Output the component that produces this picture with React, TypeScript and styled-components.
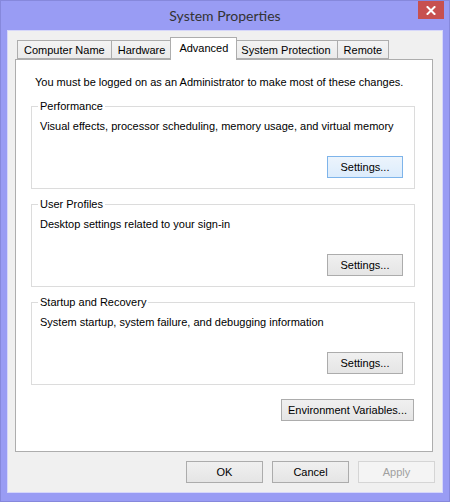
import styled, { createGlobalStyle } from 'styled-components';

const GlobalStyle = createGlobalStyle`
  html, body {
    margin: 0;
    padding: 0;
    background: #ffffff;
  }
  body {
    font-family: "Liberation Sans", Arial, sans-serif;
    font-size: 11px;
    color: #000;
  }
  * {
    box-sizing: border-box;
  }
`;

const tabs = ['Computer Name', 'Hardware', 'Advanced', 'System Protection', 'Remote'];

const groups = [
  {
    title: 'Performance',
    text: 'Visual effects, processor scheduling, memory usage, and virtual memory',
    focused: true
  },
  {
    title: 'User Profiles',
    text: 'Desktop settings related to your sign-in',
    focused: false
  },
  {
    title: 'Startup and Recovery',
    text: 'System startup, system failure, and debugging information',
    focused: false
  }
];

const CloseIcon = () => (
  <svg width="10" height="9" viewBox="0 0 10 9">
    <path d="M1.5 1 L8.5 8 M8.5 1 L1.5 8" stroke="#fff" strokeWidth="2" strokeLinecap="square" />
  </svg>
);

const App = () => {
  return (
    <>
      <GlobalStyle />
      <Window>
        <TitleBar>
          <span />
          <Title>System Properties</Title>
          <CloseButton>
            <CloseIcon />
          </CloseButton>
        </TitleBar>
        <Client>
          <TabRow>
            {tabs.map((tab) => (
              <Tab key={tab} $active={tab === 'Advanced'}>
                {tab}
              </Tab>
            ))}
          </TabRow>
          <Panel>
            <Notice>You must be logged on as an Administrator to make most of these changes.</Notice>
            {groups.map((g) => (
              <Group key={g.title}>
                <Legend>{g.title}</Legend>
                <GroupText>{g.text}</GroupText>
                <GroupActions>
                  <Button $width={76} $focused={g.focused}>
                    Settings...
                  </Button>
                </GroupActions>
              </Group>
            ))}
            <EnvRow>
              <Button $width={133}>Environment Variables...</Button>
            </EnvRow>
          </Panel>
          <DialogButtons>
            <Button $width={77}>OK</Button>
            <Button $width={77}>Cancel</Button>
            <Button $width={77} disabled>
              Apply
            </Button>
          </DialogButtons>
        </Client>
      </Window>
    </>
  );
};

export default App;

const Window = styled.div`
  width: 450px;
  height: 502px;
  background-color: #999cf4;
  border: 1px solid #8688dc;
  display: flex;
  flex-direction: column;
`;

const TitleBar = styled.div`
  height: 30px;
  display: grid;
  grid-template-columns: 1fr auto 1fr;
  align-items: start;
`;

const Title = styled.div`
  font-family: Lato, "Noto Sans", sans-serif;
  font-size: 14px;
  color: #333;
  line-height: 29px;
`;

const CloseButton = styled.div`
  justify-self: end;
  margin-right: 5px;
  width: 26px;
  height: 18px;
  background-color: #c75050;
  display: flex;
  align-items: center;
  justify-content: center;
`;

const Client = styled.div`
  flex: 1;
  margin: 0 7px 9px 7px;
  background-color: #f0f0f0;
  box-shadow: 0 0 0 1px #d6d7fa;
  padding: 6px 7px 9px 7px;
  display: flex;
  flex-direction: column;
`;

const TabRow = styled.div`
  display: flex;
  align-items: flex-end;
  padding-left: 2px;
  height: 23px;
  position: relative;
  z-index: 1;
  margin-bottom: -1px;
`;

const Tab = styled.div<{ $active?: boolean }>`
  height: ${(p) => (p.$active ? '23px' : '19px')};
  padding: ${(p) => (p.$active ? '3px 8px 0 8px' : '2px 6px 0 6px')};
  margin: ${(p) => (p.$active ? '0 -2px' : '0 0 1px 0')};
  border: 1px solid #adadad;
  border-bottom: ${(p) => (p.$active ? 'none' : '1px solid #adadad')};
  margin-left: ${(p) => (p.$active ? '-2px' : '-1px')};
  background: ${(p) => (p.$active ? '#ffffff' : 'linear-gradient(#f3f3f3, #ebebeb)')};
  position: relative;
  z-index: ${(p) => (p.$active ? 2 : 0)};
  line-height: 14px;
  white-space: nowrap;
  &:first-child {
    margin-left: 0;
  }
`;

const Panel = styled.div`
  flex: 1;
  background-color: #ffffff;
  border: 1px solid #adadad;
  margin-right: 2px;
  padding: 15px 17px 0 15px;
  display: flex;
  flex-direction: column;
`;

const Notice = styled.div`
  line-height: 14px;
  margin-left: 4px;
  margin-bottom: 10px;
`;

const Group = styled.fieldset`
  margin: 0 0 8px 0;
  padding: 6px 11px 10px 8px;
  border: 1px solid #dcdcdc;
  min-width: 0;
`;

const Legend = styled.legend`
  padding: 0 2px;
  margin-left: -2px;
  line-height: 14px;
`;

const GroupText = styled.div`
  line-height: 14px;
  height: 14px;
`;

const GroupActions = styled.div`
  display: flex;
  justify-content: flex-end;
  margin-top: 23px;
`;

const EnvRow = styled.div`
  display: flex;
  justify-content: flex-end;
  margin-top: 6px;
  margin-right: 1px;
`;

const DialogButtons = styled.div`
  display: flex;
  justify-content: flex-end;
  gap: 9px;
  margin-top: 9px;
`;

const Button = styled.button<{ $width: number; $focused?: boolean }>`
  width: ${(p) => p.$width}px;
  height: 22px;
  padding: 0;
  font-family: "Liberation Sans", Arial, sans-serif;
  font-size: 11px;
  color: #000;
  border: 1px solid ${(p) => (p.$focused ? '#7eb4ea' : '#acacac')};
  background: ${(p) => (p.$focused ? 'linear-gradient(#ecf4fc, #dcecfc)' : 'linear-gradient(#f0f0f0, #e5e5e5)')};
  border-radius: 0;
  &:disabled {
    color: #a0a0a0;
    border-color: #d5d5d5;
    background: #f4f4f4;
  }
`;
